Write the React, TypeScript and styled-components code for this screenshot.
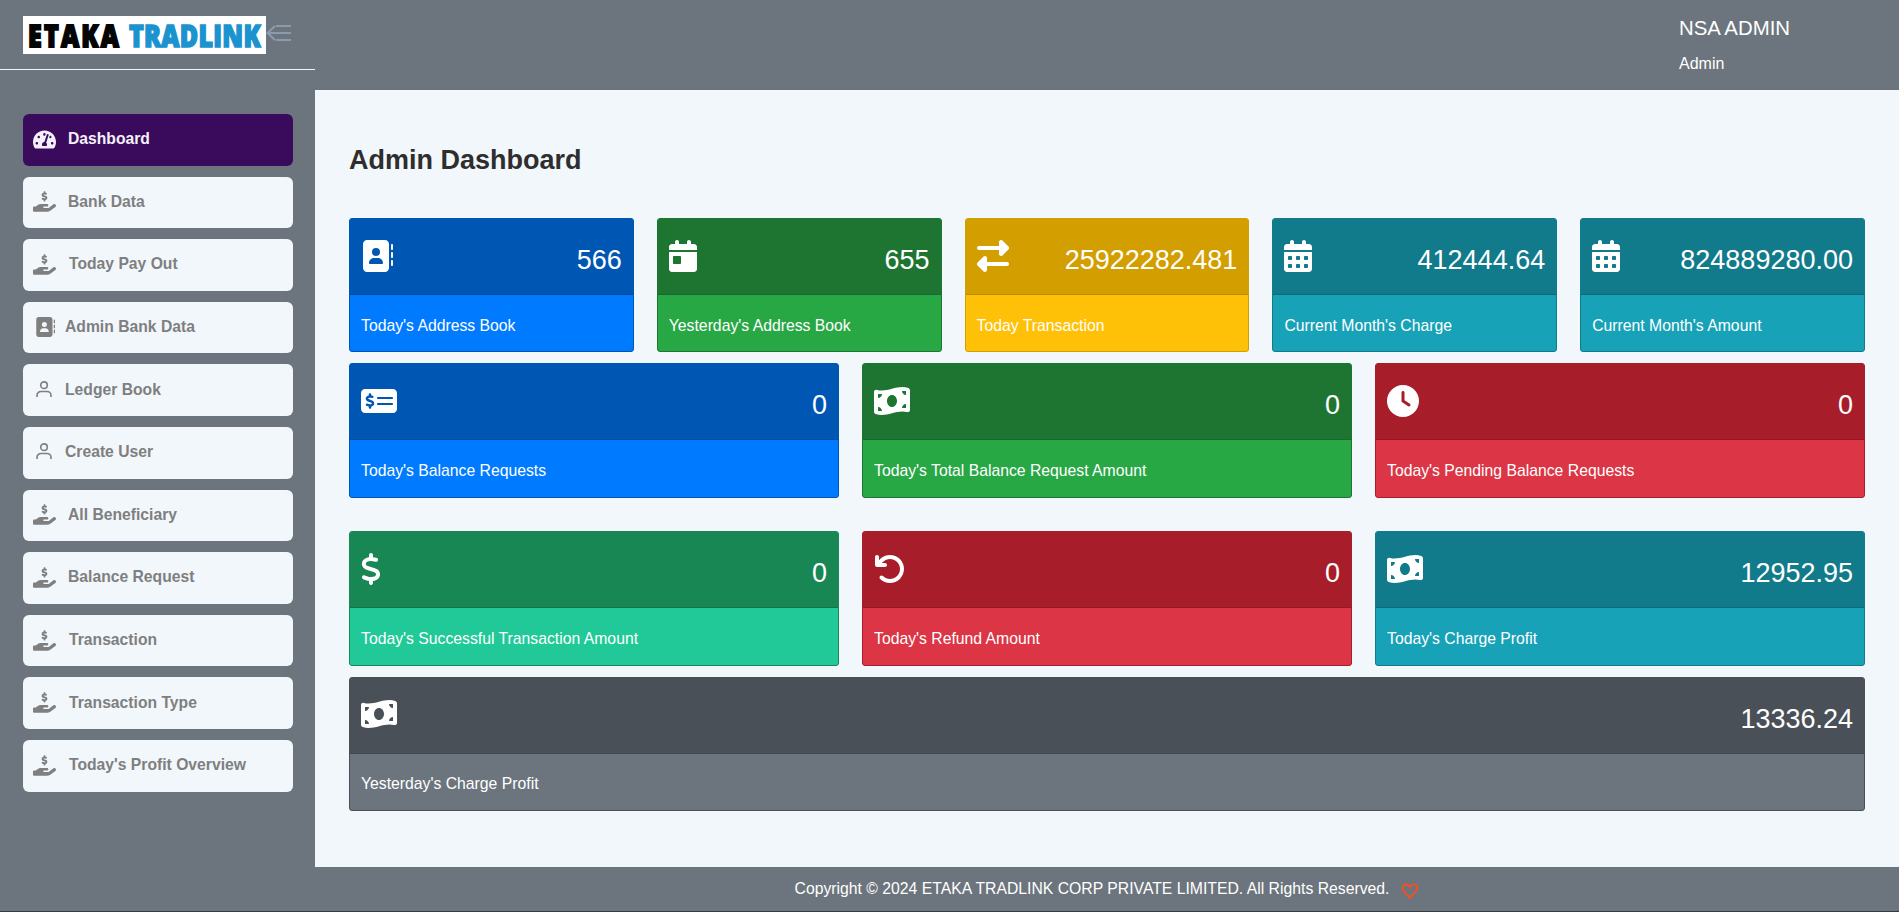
import React, { FC, ReactNode } from 'react';
import styled, { createGlobalStyle } from 'styled-components';
import { FaTachometerAlt } from 'react-icons/fa';
import {
  FaAddressBook,
  FaArrowRotateLeft,
  FaCalendarDay,
  FaCalendarDays,
  FaClock,
  FaDollarSign,
  FaHandHoldingDollar,
  FaMoneyBillWave,
  FaMoneyCheckDollar,
  FaRightLeft,
} from 'react-icons/fa6';

const GlobalStyle = createGlobalStyle`
  html, body {
    margin: 0;
    padding: 0;
    background: #343a40;
    font-family: "Liberation Sans", Arial, sans-serif;
  }
  * { box-sizing: border-box; }
`;

const Layout = styled.div`
  display: grid;
  grid-template-columns: 315px 1fr;
  height: 911px;
  background: #6c757d;
`;

const Sidebar = styled.aside`
  display: flex;
  flex-direction: column;
  background: #6c757d;
`;

const Brand = styled.div`
  display: flex;
  align-items: flex-start;
  height: 70px;
  padding: 16px 0 0 23px;
  border-bottom: 1px solid #f1f6fb;
`;

const Logo = styled.div`
  display: flex;
  align-items: center;
  justify-content: center;
  gap: 8px;
  width: 243px;
  height: 38px;
  background: #fff;
  font-family: "Open Sans", sans-serif;
  font-size: 25px;
  font-weight: 800;
  line-height: 1;
  white-space: nowrap;
`;

const LogoDark = styled.span`
  display: inline-block;
  color: #050505;
  letter-spacing: 2.2px;
  -webkit-text-stroke: 1.5px #050505;
  transform: scaleY(1.2);
`;

const LogoBlue = styled.span`
  display: inline-block;
  color: #1b93cf;
  letter-spacing: 0.3px;
  -webkit-text-stroke: 1.3px #1b93cf;
  transform: scaleY(1.2);
`;

const Toggle = styled.svg`
  flex: none;
  width: 26px;
  height: 20px;
  margin-top: 8px;
  fill: none;
  stroke: #8c9ab0;
  stroke-width: 2;
`;

const Nav = styled.nav`
  display: flex;
  flex-direction: column;
  gap: 11px;
  padding: 44px 22px 0 23px;
`;

const NavItem = styled.a<{ $active?: boolean; $gap: number; $iconLeft: number }>`
  display: flex;
  align-items: center;
  height: 51.6px;
  padding-left: ${(p) => p.$iconLeft}px;
  padding-bottom: 1px;
  gap: ${(p) => p.$gap}px;
  border-radius: 6px;
  background: ${(p) => (p.$active ? '#3a0b5c' : '#f2f7fc')};
  color: ${(p) => (p.$active ? '#f6f0fa' : '#7f7f7f')};
  font-size: 15.7px;
  font-weight: 700;
  svg {
    flex: none;
    display: block;
  }
`;

const UserGlyph = styled.svg`
  width: 16px;
  height: 16px;
  margin-bottom: 2px;
  fill: none;
  stroke: #7f7f7f;
  stroke-width: 1.6;
`;

const Content = styled.div`
  display: flex;
  flex-direction: column;
  min-width: 0;
`;

const Topbar = styled.header`
  display: flex;
  flex-direction: column;
  height: 90px;
  padding: 17px 0 0 1364px;
  background: #6c757d;
  color: #fff;
`;

const UserName = styled.div`
  font-size: 20.4px;
  line-height: 22px;
`;

const UserRole = styled.div`
  margin-top: 15px;
  font-size: 16px;
  line-height: 20px;
`;

const Main = styled.main`
  flex: 1;
  padding: 54px 34px 0;
  background: #f2f7fb;
`;

const Title = styled.h1`
  margin: 0 0 42px;
  color: #2e2e2e;
  font-size: 27px;
  font-weight: 700;
  line-height: 32px;
`;

const Row = styled.div<{ $cols: number; $after?: number }>`
  display: grid;
  grid-template-columns: repeat(${(p) => p.$cols}, 1fr);
  gap: 23px;
  margin-bottom: ${(p) => p.$after ?? 11}px;
`;

type Tone = 'blue' | 'green' | 'yellow' | 'teal' | 'red' | 'mint' | 'grey';

const tones: Record<Tone, { head: string; body: string; line: string }> = {
  blue: { head: '#0056b3', body: '#007bff', line: '#004a9c' },
  green: { head: '#1e7531', body: '#28a745', line: '#1a682b' },
  yellow: { head: '#d39e00', body: '#ffc107', line: '#b98b00' },
  teal: { head: '#117a8b', body: '#17a2b8', line: '#0e6a79' },
  red: { head: '#a71d2a', body: '#dc3545', line: '#931924' },
  mint: { head: '#198754', body: '#20c997', line: '#157347' },
  grey: { head: '#495057', body: '#6c757d', line: '#3f464c' },
};

const CardBox = styled.div<{ $tone: Tone }>`
  display: flex;
  flex-direction: column;
  height: 134.3px;
  overflow: hidden;
  border: 1px solid ${(p) => tones[p.$tone].head};
  border-radius: 3px;
  background: ${(p) => tones[p.$tone].body};
  color: #fff;
`;

const CardHead = styled.div<{ $tone: Tone }>`
  display: flex;
  justify-content: space-between;
  flex: none;
  height: 76px;
  padding: 20.5px 11px 0 11px;
  border-bottom: 1px solid ${(p) => tones[p.$tone].line};
  background: ${(p) => tones[p.$tone].head};
`;

// the glyphs sit centred in a square box, so wide ones get a bigger box and narrow ones a shift
const IconSlot = styled.span<{ $size?: number; $shift?: number }>`
  display: block;
  flex: none;
  margin-top: ${(p) => (32 - (p.$size ?? 32)) / 2}px;
  margin-left: ${(p) => p.$shift ?? 0}px;
  svg {
    display: block;
    width: ${(p) => p.$size ?? 32}px;
    height: ${(p) => p.$size ?? 32}px;
  }
`;

const CardValue = styled.div`
  margin-top: 4.5px;
  font-size: 27px;
  line-height: 32px;
`;

const CardLabel = styled.div`
  padding: 21.5px 11px 0;
  font-size: 15.75px;
  line-height: 18px;
`;

const Footer = styled.footer`
  display: flex;
  align-items: center;
  justify-content: center;
  gap: 12px;
  height: 44px;
  background: #6c757d;
  color: #fff;
  font-size: 15.75px;
`;

const Heart = styled.svg`
  width: 18px;
  height: 16px;
  margin-top: 3px;
  fill: none;
  stroke: #fb4d1e;
  stroke-width: 2.4;
`;

interface ICardProps {
  tone: Tone;
  icon: ReactNode;
  value: string;
  label: string;
}

const Card: FC<ICardProps> = ({ tone, icon, value, label }) => (
  <CardBox $tone={tone}>
    <CardHead $tone={tone}>
      {icon}
      <CardValue>{value}</CardValue>
    </CardHead>
    <CardLabel>{label}</CardLabel>
  </CardBox>
);

const hand = <FaHandHoldingDollar size={23} />;
const user = (
  <UserGlyph viewBox="0 0 16 16">
    <circle cx="8" cy="4.2" r="3.3" />
    <path d="M1 16v-1.5a4 4 0 0 1 4-4h6a4 4 0 0 1 4 4V16" />
  </UserGlyph>
);

const navItems = [
  { label: 'Dashboard', icon: <FaTachometerAlt size={23} />, gap: 12, left: 10, active: true },
  { label: 'Bank Data', icon: hand, gap: 12, left: 10 },
  { label: 'Today Pay Out', icon: hand, gap: 13, left: 10 },
  { label: 'Admin Bank Data', icon: <FaAddressBook size={20} />, gap: 10, left: 12 },
  { label: 'Ledger Book', icon: user, gap: 13, left: 13 },
  { label: 'Create User', icon: user, gap: 13, left: 13 },
  { label: 'All Beneficiary', icon: hand, gap: 12, left: 10 },
  { label: 'Balance Request', icon: hand, gap: 12, left: 10 },
  { label: 'Transaction', icon: hand, gap: 13, left: 10 },
  { label: 'Transaction Type', icon: hand, gap: 13, left: 10 },
  { label: "Today's Profit Overview", icon: hand, gap: 13, left: 10 },
];

const bookIcon = <IconSlot><FaAddressBook /></IconSlot>;
const dayIcon = <IconSlot $shift={-2}><FaCalendarDay /></IconSlot>;
const daysIcon = <IconSlot $shift={-2}><FaCalendarDays /></IconSlot>;
const swapIcon = <IconSlot><FaRightLeft /></IconSlot>;
const checkIcon = <IconSlot $size={36}><FaMoneyCheckDollar /></IconSlot>;
const billIcon = <IconSlot $size={36}><FaMoneyBillWave /></IconSlot>;
const clockIcon = <IconSlot><FaClock /></IconSlot>;
const dollarIcon = <IconSlot $shift={-6}><FaDollarSign /></IconSlot>;
const undoIcon = <IconSlot><FaArrowRotateLeft /></IconSlot>;

export default function App() {
  return (
    <>
      <GlobalStyle />
      <Layout>
        <Sidebar>
          <Brand>
            <Logo>
              <LogoDark>ETAKA</LogoDark>
              <LogoBlue>TRADLINK</LogoBlue>
            </Logo>
            <Toggle viewBox="0 0 26 20">
              <path d="M9 2 1.5 9l7.5 7M1.5 9H25M10 2h15M10 16h15" />
            </Toggle>
          </Brand>
          <Nav>
            {navItems.map((item) => (
              <NavItem key={item.label} $active={item.active} $gap={item.gap} $iconLeft={item.left}>
                {item.icon}
                {item.label}
              </NavItem>
            ))}
          </Nav>
        </Sidebar>
        <Content>
          <Topbar>
            <UserName>NSA ADMIN</UserName>
            <UserRole>Admin</UserRole>
          </Topbar>
          <Main>
            <Title>Admin Dashboard</Title>
            <Row $cols={5}>
              <Card tone="blue" icon={bookIcon} value="566" label="Today's Address Book" />
              <Card tone="green" icon={dayIcon} value="655" label="Yesterday's Address Book" />
              <Card tone="yellow" icon={swapIcon} value="25922282.481" label="Today Transaction" />
              <Card tone="teal" icon={daysIcon} value="412444.64" label="Current Month's Charge" />
              <Card tone="teal" icon={daysIcon} value="824889280.00" label="Current Month's Amount" />
            </Row>
            <Row $cols={3} $after={33.7}>
              <Card tone="blue" icon={checkIcon} value="0" label="Today's Balance Requests" />
              <Card tone="green" icon={billIcon} value="0" label="Today's Total Balance Request Amount" />
              <Card tone="red" icon={clockIcon} value="0" label="Today's Pending Balance Requests" />
            </Row>
            <Row $cols={3}>
              <Card tone="mint" icon={dollarIcon} value="0" label="Today's Successful Transaction Amount" />
              <Card tone="red" icon={undoIcon} value="0" label="Today's Refund Amount" />
              <Card tone="teal" icon={billIcon} value="12952.95" label="Today's Charge Profit" />
            </Row>
            <Row $cols={1}>
              <Card tone="grey" icon={billIcon} value="13336.24" label="Yesterday's Charge Profit" />
            </Row>
          </Main>
          <Footer>
            <span>Copyright © 2024 ETAKA TRADLINK CORP PRIVATE LIMITED. All Rights Reserved.</span>
            <Heart viewBox="0 0 24 22">
              <path d="M12 20.5 3 10.5C.5 7.5 2 2 6.8 2c2.500 0 4.200 1.500 5.200 3.500C13 3.500 14.700 2 17.200 2 22 2 23.500 7.500 21 10.500Z" />
            </Heart>
          </Footer>
        </Content>
      </Layout>
    </>
  );
}
